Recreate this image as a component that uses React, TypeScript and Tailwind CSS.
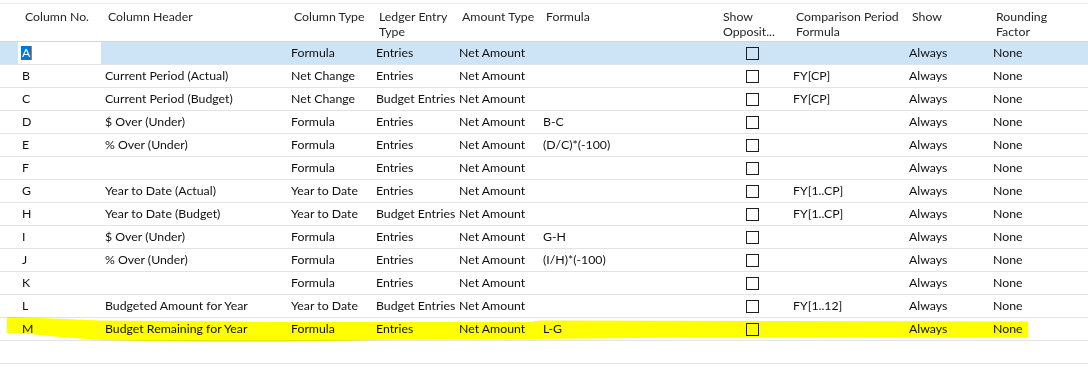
import React from "react";

type Row = {
  no: string;
  header: string;
  type: string;
  ledger: string;
  amount: string;
  formula: string;
  comp: string;
};

const rows: Row[] = [
  { no: "A", header: "", type: "Formula", ledger: "Entries", amount: "Net Amount", formula: "", comp: "" },
  { no: "B", header: "Current Period (Actual)", type: "Net Change", ledger: "Entries", amount: "Net Amount", formula: "", comp: "FY[CP]" },
  { no: "C", header: "Current Period (Budget)", type: "Net Change", ledger: "Budget Entries", amount: "Net Amount", formula: "", comp: "FY[CP]" },
  { no: "D", header: "$ Over (Under)", type: "Formula", ledger: "Entries", amount: "Net Amount", formula: "B-C", comp: "" },
  { no: "E", header: "% Over (Under)", type: "Formula", ledger: "Entries", amount: "Net Amount", formula: "(D/C)*(-100)", comp: "" },
  { no: "F", header: "", type: "Formula", ledger: "Entries", amount: "Net Amount", formula: "", comp: "" },
  { no: "G", header: "Year to Date (Actual)", type: "Year to Date", ledger: "Entries", amount: "Net Amount", formula: "", comp: "FY[1..CP]" },
  { no: "H", header: "Year to Date (Budget)", type: "Year to Date", ledger: "Budget Entries", amount: "Net Amount", formula: "", comp: "FY[1..CP]" },
  { no: "I", header: "$ Over (Under)", type: "Formula", ledger: "Entries", amount: "Net Amount", formula: "G-H", comp: "" },
  { no: "J", header: "% Over (Under)", type: "Formula", ledger: "Entries", amount: "Net Amount", formula: "(I/H)*(-100)", comp: "" },
  { no: "K", header: "", type: "Formula", ledger: "Entries", amount: "Net Amount", formula: "", comp: "" },
  { no: "L", header: "Budgeted Amount for Year", type: "Year to Date", ledger: "Budget Entries", amount: "Net Amount", formula: "", comp: "FY[1..12]" },
  { no: "M", header: "Budget Remaining for Year", type: "Formula", ledger: "Entries", amount: "Net Amount", formula: "L-G", comp: "" },
];

const grid =
  "grid grid-cols-[18px_83px_186px_85px_83px_84px_177px_73px_116px_84px_1fr]";

function Checkbox() {
  return <div className="w-[13px] h-[13px] border border-[#1f1f1f] bg-transparent" />;
}

function HeaderCell({ lines }: { lines: string[] }) {
  return (
    <div className="pl-[7px] pt-[5px] leading-[15px] text-[#262626] whitespace-nowrap">
      {lines.map((l, i) => (
        <div key={i}>{l}</div>
      ))}
    </div>
  );
}

function Cell({ children }: { children?: React.ReactNode }) {
  return (
    <div className="pl-[4px] leading-[22px] whitespace-nowrap">{children}</div>
  );
}

export default function App() {
  return (
    <div
      className="relative w-[1088px] h-[375px] overflow-hidden bg-white text-[12.3px] text-[#111111]"
      style={{ fontFamily: "Lato, 'Open Sans', sans-serif" }}
    >
      <div className="h-[3px]" />
      <div className={`${grid} h-[39px] border-t border-b border-t-[#ebebeb] border-b-[#d6d6d6]`}>
        <div />
        <HeaderCell lines={["Column No."]} />
        <HeaderCell lines={["Column Header"]} />
        <HeaderCell lines={["Column Type"]} />
        <HeaderCell lines={["Ledger Entry", "Type"]} />
        <HeaderCell lines={["Amount Type"]} />
        <HeaderCell lines={["Formula"]} />
        <HeaderCell lines={["Show", "Opposit..."]} />
        <HeaderCell lines={["Comparison Period", "Formula"]} />
        <HeaderCell lines={["Show"]} />
        <HeaderCell lines={["Rounding", "Factor"]} />
      </div>
      {rows.map((r, i) => {
        const selected = i === 0;
        return (
          <div
            key={r.no}
            className={`${grid} h-[23px] border-b border-[#e3e3e3] ${selected ? "bg-[#cde4f7]" : ""}`}
          >
            <div />
            {selected ? (
              <div className="bg-white pl-[3px] flex items-center">
                <span className="bg-[#0078d7] text-white leading-[14px] px-[1px]">A</span>
                <span className="w-[1px] h-[14px] bg-[#e07020]" />
              </div>
            ) : (
              <Cell>{r.no}</Cell>
            )}
            <Cell>{r.header}</Cell>
            <Cell>{r.type}</Cell>
            <Cell>{r.ledger}</Cell>
            <Cell>{r.amount}</Cell>
            <Cell>{r.formula}</Cell>
            <div className="flex items-center justify-center">
              <Checkbox />
            </div>
            <Cell>{r.comp}</Cell>
            <Cell>Always</Cell>
            <Cell>None</Cell>
          </div>
        );
      })}
      <div className={`${grid} h-[23px] border-b border-[#e3e3e3]`} />

      <svg
        className="absolute left-0 top-0 pointer-events-none mix-blend-multiply"
        width={1088}
        height={375}
        viewBox="0 0 1088 375"
      >
        <polygon
          fill="#ffff00"
          points="7,317 40,318 100,320.5 290,322 530,322 540,320.5 1028,321.5 1028,337.7 690,337.5 530,339 400,339.5 290,342 200,342 100,340 60,337 30,334 7,333"
        />
      </svg>
    </div>
  );
}
